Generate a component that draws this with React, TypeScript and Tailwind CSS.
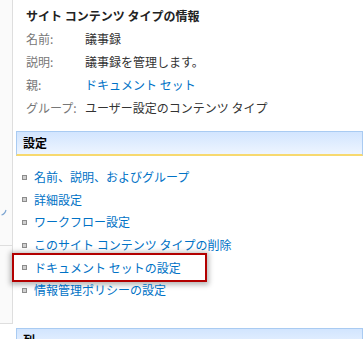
const font = { fontFamily: '"Noto Sans CJK JP", "Noto Sans", sans-serif' }

const info = [
  { label: '名前:', value: '議事録' },
  { label: '説明:', value: '議事録を管理します。' },
  { label: '親:', value: 'ドキュメント セット', link: true },
  { label: 'グループ:', value: 'ユーザー設定のコンテンツ タイプ' },
]

const links = [
  '名前、説明、およびグループ',
  '詳細設定',
  'ワークフロー設定',
  'このサイト コンテンツ タイプの削除',
  'ドキュメント セットの設定',
  '情報管理ポリシーの設定',
]

function SectionHeader({ title }: { title: string }) {
  return (
    <div className="h-[25px] flex items-center pl-[6px] border border-[#a9cbf2] border-b-2 border-b-[#f7d96f] bg-gradient-to-b from-[#d2e5fe] to-[#eef5ff]">
      <span className="text-[12px] font-bold text-black leading-none">{title}</span>
    </div>
  )
}

export default function App() {
  return (
    <div className="w-[363px] h-[339px] overflow-hidden bg-white flex text-[12px]" style={font}>
      {/* left nav strip */}
      <div className="w-[13px] shrink-0 h-[324px] bg-[#fafafa] border-r border-b border-[#dedede] flex flex-col">
        <div className="h-[246px] border-b border-[#dedede] flex flex-col">
          <div className="mt-[209px] ml-[1px]">
            <svg width="6" height="7" viewBox="0 0 6 7">
              <path d="M5 1 Q4 5 0.5 6" stroke="#7ea6d2" strokeWidth="1.2" fill="none" />
            </svg>
          </div>
        </div>
      </div>

      <div className="flex-1 pl-[3px] flex flex-col">
        <div className="pl-[10px] pt-[5px]">
          <div className="h-[22px] flex items-center font-bold text-[#222]">サイト コンテンツ タイプの情報</div>
          {info.map((r, i) => (
            <div key={i} className="h-[23px] flex items-center">
              <span className="w-[59px] shrink-0 text-[#777]">{r.label}</span>
              <span className={r.link ? 'text-[#0072c6]' : 'text-[#333]'}>{r.value}</span>
            </div>
          ))}
        </div>

        <div className="mt-[12px]">
          <SectionHeader title="設定" />
        </div>

        <div className="mt-[10px]">
          {links.map((l, i) => (
            <div key={i} className="relative h-[22.6px] flex items-center pl-[6px]">
              <span className="w-[5px] h-[5px] border border-[#8c8c8c] bg-[#cfcfcf] shrink-0" />
              <span className="ml-[7px] text-[#0072c6] leading-none">{l}</span>
              {i === 4 && (
                <div className="absolute left-[-4px] top-[-3px] w-[195px] h-[29px] border-2 border-[#b30000] shadow-[0_1px_5px_2px_rgba(0,0,0,0.28)]" />
              )}
            </div>
          ))}
        </div>

        <div className="mt-[26px]">
          <SectionHeader title="列" />
        </div>
      </div>
    </div>
  )
}
